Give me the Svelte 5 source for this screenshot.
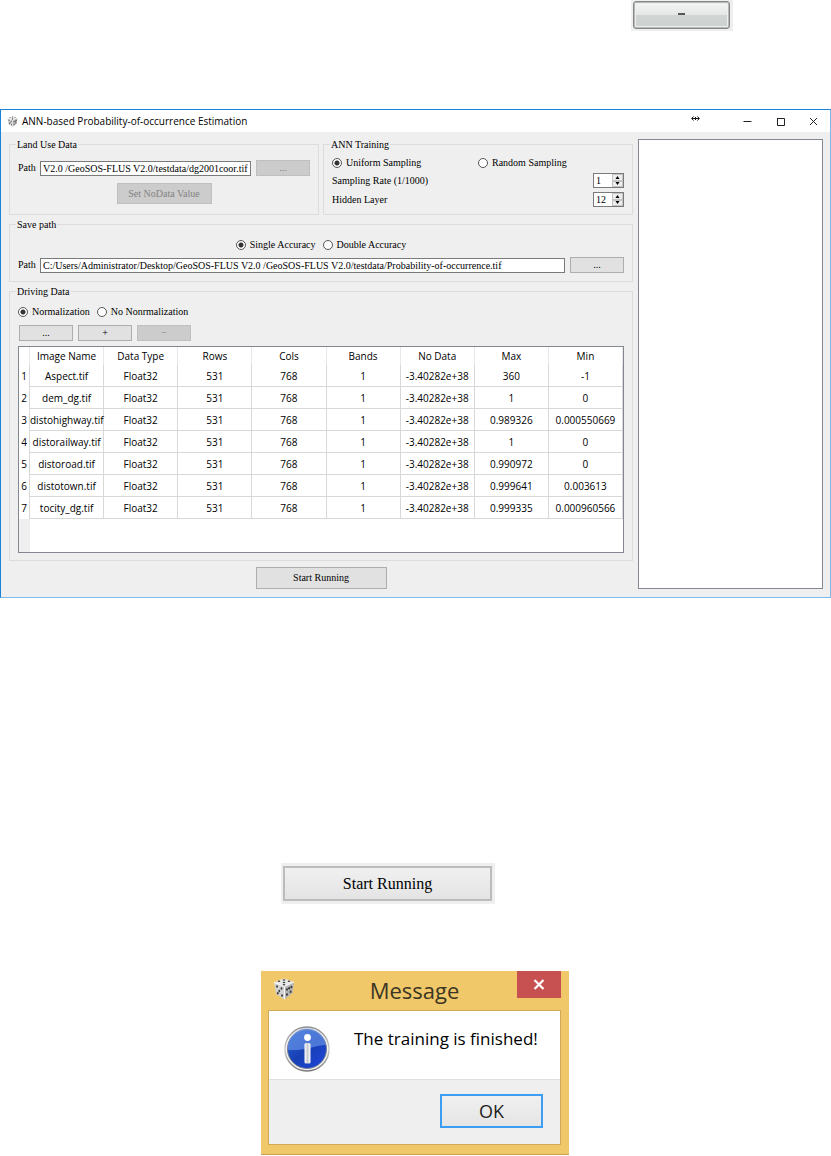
<script>
	let landUsePath = $state('V2.0 /GeoSOS-FLUS V2.0/testdata/dg2001coor.tif');
	let savePath = $state(
		'C:/Users/Administrator/Desktop/GeoSOS-FLUS V2.0 /GeoSOS-FLUS V2.0/testdata/Probability-of-occurrence.tif'
	);
	let sampling = $state('uniform');
	let accuracy = $state('single');
	let normalization = $state('yes');
	let samplingRate = $state(1);
	let hiddenLayer = $state(12);

	const columns = ['Image Name', 'Data Type', 'Rows', 'Cols', 'Bands', 'No Data', 'Max', 'Min'];

	const noData = '-3.40282e+38';
	const images = [
		['Aspect.tif', 'Float32', 531, 768, 1, noData, '360', '-1'],
		['dem_dg.tif', 'Float32', 531, 768, 1, noData, '1', '0'],
		['distohighway.tif', 'Float32', 531, 768, 1, noData, '0.989326', '0.000550669'],
		['distorailway.tif', 'Float32', 531, 768, 1, noData, '1', '0'],
		['distoroad.tif', 'Float32', 531, 768, 1, noData, '0.990972', '0'],
		['distotown.tif', 'Float32', 531, 768, 1, noData, '0.999641', '0.003613'],
		['tocity_dg.tif', 'Float32', 531, 768, 1, noData, '0.999335', '0.000960566']
	];
</script>

{#snippet dice(size)}
	<svg class="dice" width={size} height={size} viewBox="0 0 22 22" aria-hidden="true">
		<path d="M11 0.5 L21 4 L11.5 8.5 L1 4.5 Z" fill="#e9e9e9" />
		<path d="M1 4.5 L11.5 8.5 L11.5 21.5 L3 16 Z" fill="#d2d2d2" />
		<path d="M21 4 L11.5 8.5 L11.5 21.5 L19.5 15 Z" fill="#b4b4b4" />
		<path d="M1 4.5 L11.5 8.5 L21 4 M11.5 8.5 V21.5" fill="none" stroke="#f8f8f8" />
		<g fill="#3c3c3c">
			<ellipse cx="11" cy="2" rx="1.3" ry="0.8" />
			<ellipse cx="6" cy="3.3" rx="1.3" ry="0.8" />
			<ellipse cx="16" cy="3.3" rx="1.3" ry="0.8" />
			<ellipse cx="11" cy="4.5" rx="1.3" ry="0.8" />
			<ellipse cx="11" cy="6.8" rx="1.3" ry="0.8" />
			<ellipse cx="4" cy="8.5" rx="0.9" ry="1.3" />
			<ellipse cx="8.5" cy="10.5" rx="0.9" ry="1.3" />
			<ellipse cx="6.3" cy="13" rx="0.9" ry="1.3" />
			<ellipse cx="4.8" cy="15.3" rx="0.9" ry="1.3" />
			<ellipse cx="9" cy="17.5" rx="0.9" ry="1.3" />
			<ellipse cx="14" cy="11.5" rx="1" ry="1.2" />
			<ellipse cx="16.2" cy="10.3" rx="1" ry="1.2" />
			<ellipse cx="18.4" cy="9" rx="1" ry="1.2" />
			<ellipse cx="14" cy="16.5" rx="1" ry="1.2" />
			<ellipse cx="17.6" cy="13.8" rx="1" ry="1.2" />
		</g>
	</svg>
{/snippet}

{#snippet arrows(up, down)}
	<span class="arrows">
		<button type="button" aria-label="Increase" onclick={up}>
			<svg width="5" height="3" viewBox="0 0 5 3"><path d="M2.5 0 L4.5 3 H0.5 Z" /></svg>
		</button>
		<button type="button" aria-label="Decrease" onclick={down}>
			<svg width="5" height="3" viewBox="0 0 5 3"><path d="M2.5 3 L4.5 0 H0.5 Z" /></svg>
		</button>
	</span>
{/snippet}

<main>
	<div class="remove-panel">
		<button class="glossy" type="button" aria-label="Remove"><span></span></button>
	</div>

	<section class="window">
		<header class="titlebar">
			{@render dice(11)}
			<h1>ANN-based Probability-of-occurrence Estimation</h1>
			<svg class="resize" width="9" height="7" viewBox="0 0 9 7" aria-hidden="true">
				<path d="M1 3.5 H8 M2.5 1.5 L0.7 3.5 L2.5 5.5 M6.5 1.5 L8.3 3.5 L6.5 5.5" fill="none" stroke="#111" />
				<path d="M4.5 2 V5" stroke="#111" />
			</svg>
			<button type="button" aria-label="Minimize">
				<svg width="9" height="9" viewBox="0 0 9 9"><path d="M0.5 4.5 H8.5" /></svg>
			</button>
			<button type="button" aria-label="Maximize">
				<svg width="9" height="9" viewBox="0 0 9 9"><path d="M1 1.5 H8.5 V8.5 H1.5 V1" /></svg>
			</button>
			<button type="button" aria-label="Close">
				<svg width="9" height="9" viewBox="0 0 9 9"><path d="M1 1 L8 8 M8 1 L1 8" /></svg>
			</button>
		</header>

		<div class="body">
			<div class="form">
				<div class="pair">
					<fieldset class="land">
						<legend>Land Use Data</legend>
						<div class="path-row">
							<label for="land-path">Path</label>
							<input id="land-path" class="text" type="text" bind:value={landUsePath} />
							<button class="btn" type="button" disabled>...</button>
						</div>
						<button class="btn nodata" type="button" disabled>Set NoData Value</button>
					</fieldset>

					<fieldset class="training">
						<legend>ANN Training</legend>
						<div class="halves">
							<label><input type="radio" value="uniform" bind:group={sampling} />Uniform Sampling</label>
							<label><input type="radio" value="random" bind:group={sampling} />Random Sampling</label>
						</div>
						<div class="spin-row">
							<label for="rate">Sampling Rate (1/1000)</label>
							<span class="spin">
								<input id="rate" type="text" bind:value={samplingRate} />
								{@render arrows(() => samplingRate++, () => samplingRate--)}
							</span>
						</div>
						<div class="spin-row">
							<label for="hidden">Hidden Layer</label>
							<span class="spin">
								<input id="hidden" type="text" bind:value={hiddenLayer} />
								{@render arrows(() => hiddenLayer++, () => hiddenLayer--)}
							</span>
						</div>
					</fieldset>
				</div>

				<fieldset class="save">
					<legend>Save path</legend>
					<div class="radios center">
						<label><input type="radio" value="single" bind:group={accuracy} />Single Accuracy</label>
						<label><input type="radio" value="double" bind:group={accuracy} />Double Accuracy</label>
					</div>
					<div class="path-row">
						<label for="save-path">Path</label>
						<input id="save-path" class="text" type="text" bind:value={savePath} />
						<button class="btn" type="button">...</button>
					</div>
				</fieldset>

				<fieldset class="driving">
					<legend>Driving Data</legend>
					<div class="radios">
						<label><input type="radio" value="yes" bind:group={normalization} />Normalization</label>
						<label><input type="radio" value="no" bind:group={normalization} />No Nonrmalization</label>
					</div>
					<div class="tools">
						<button class="btn" type="button">...</button>
						<button class="btn" type="button">+</button>
						<button class="btn" type="button" disabled>−</button>
					</div>
					<div class="grid">
						<table>
							<thead>
								<tr>
									<th class="num"></th>
									{#each columns as column}
										<th>{column}</th>
									{/each}
								</tr>
							</thead>
							<tbody>
								{#each images as image, i}
									<tr>
										<th class="num">{i + 1}</th>
										{#each image as value}
											<td>{value}</td>
										{/each}
									</tr>
								{/each}
							</tbody>
						</table>
						<div class="gutter"></div>
					</div>
				</fieldset>

				<button class="btn start" type="button">Start Running</button>
			</div>

			<textarea class="log" aria-label="Log" readonly></textarea>
		</div>
	</section>

	<div class="start-panel">
		<button type="button">Start Running</button>
	</div>

	<section class="message" role="dialog" aria-labelledby="message-title">
		<header>
			{@render dice(22)}
			<h2 id="message-title">Message</h2>
			<button type="button" aria-label="Close">
				<svg width="12" height="11" viewBox="0 0 12 11">
					<path d="M1.5 1 L10.5 10 M10.5 1 L1.5 10" fill="none" stroke="#fff" stroke-width="2.2" />
				</svg>
			</button>
		</header>
		<div class="message-box">
			<div class="content">
				<svg width="46" height="46" viewBox="0 0 46 46" aria-hidden="true">
					<defs>
						<linearGradient id="ring" x1="0" y1="0" x2="0" y2="1">
							<stop offset="0" stop-color="#8d8d8d" />
							<stop offset="0.5" stop-color="#cfcfcf" />
							<stop offset="1" stop-color="#777" />
						</linearGradient>
						<linearGradient id="blue" x1="0" y1="0" x2="1" y2="1">
							<stop offset="0" stop-color="#2a5fd0" />
							<stop offset="0.5" stop-color="#1740b4" />
							<stop offset="1" stop-color="#2146dc" />
						</linearGradient>
						<linearGradient id="stem" x1="0" y1="0" x2="1" y2="0">
							<stop offset="0" stop-color="#fff" />
							<stop offset="0.5" stop-color="#c9cbd2" />
							<stop offset="1" stop-color="#fff" />
						</linearGradient>
					</defs>
					<circle cx="23" cy="23" r="22" fill="#f4f4f4" stroke="url(#ring)" stroke-width="1.5" />
					<circle cx="23" cy="23" r="19.5" fill="url(#blue)" stroke="#777d90" />
					<path d="M4 24 A19 19 0 0 1 42 19 C32 19 23 25 4 24 Z" fill="#6f9cec" opacity="0.6" />
					<circle cx="23.5" cy="11.5" r="3.4" fill="#fff" />
					<rect x="20.5" y="17" width="6" height="20.5" rx="1.5" fill="url(#stem)" />
				</svg>
				<p>The training is finished!</p>
			</div>
			<div class="actions">
				<button type="button">OK</button>
			</div>
		</div>
	</section>
</main>

<style>
	:global(body) {
		margin: 0;
		background: #fff;
	}

	main {
		--serif: 'Liberation Serif', 'Times New Roman', serif;
		--sans: 'Open Sans', 'Noto Sans', sans-serif;
		--panel: #efefef;
		display: flow-root;
		color: #000;
		font: 10px/12px var(--serif);
	}

	button,
	input,
	textarea {
		box-sizing: border-box;
		margin: 0;
		padding: 0;
		color: inherit;
		font: inherit;
	}

	svg {
		display: block;
		flex: none;
	}

	.remove-panel {
		width: 102px;
		height: 31px;
		box-sizing: border-box;
		margin: 0 98px 78px auto;
		padding: 1px 2px;
		background: var(--panel);
	}

	.glossy {
		display: flex;
		align-items: center;
		justify-content: center;
		width: 97px;
		height: 28px;
		border: 1px solid #858887;
		border-radius: 3px;
		background: linear-gradient(#f3f6f5, #e4e7e6 48%, #d0d4d2 52%, #cdd1cf);
		box-shadow: inset 0 0 0 1px #b5b8b7, inset 0 0 0 2px #eef0ef;
	}

	.glossy span {
		width: 7px;
		height: 2px;
		margin-bottom: 2px;
		background: #555;
	}

	.window {
		border: 1px solid #1883d7;
		border-right-color: #7ab9eb;
		border-bottom-color: #7ab9eb;
		background: var(--panel);
	}

	.titlebar {
		display: flex;
		align-items: center;
		height: 22px;
		padding-left: 6px;
		background: #fff;
	}

	.titlebar h1 {
		flex: 1;
		margin: 0 0 0 4px;
		font: 10px/14px var(--sans);
	}

	.titlebar .resize {
		margin: 0 31px 6px 0;
	}

	.titlebar button {
		display: flex;
		justify-content: center;
		width: 33px;
		border: 0;
		background: none;
	}

	.titlebar button path {
		fill: none;
		stroke: #222;
	}

	.body {
		display: grid;
		grid-template-columns: 1fr 185px;
		gap: 5px;
		padding: 7px 7px 8px 8px;
	}

	.pair {
		display: grid;
		grid-template-columns: 1fr 1fr;
		gap: 4px;
		margin-bottom: 4px;
	}

	fieldset {
		min-width: 0;
		margin: 0;
		padding: 0 8px;
		border: 1px solid #dcdcdc;
	}

	legend {
		margin-left: -2px;
		padding: 0 1px;
		line-height: 11px;
	}

	.land {
		padding-top: 10px;
		padding-bottom: 10px;
	}

	.path-row {
		display: flex;
		gap: 5px;
		align-items: center;
	}

	.path-row label {
		width: 17px;
	}

	.text {
		flex: 1;
		min-width: 0;
		height: 15px;
		padding: 0 2px;
		border: 1px solid #7a7a7a;
		background: #fff;
	}

	.btn {
		width: 54px;
		height: 16px;
		border: 1px solid #adadad;
		background: #e1e1e1;
		line-height: 12px;
	}

	.btn:disabled {
		border-color: #bfbfbf;
		background: #ccc;
		color: #838383;
	}

	.nodata {
		display: block;
		width: 95px;
		height: 21px;
		margin: 7px auto 0;
	}

	.training {
		padding-top: 7px;
	}

	.halves {
		display: grid;
		grid-template-columns: 1fr 1fr;
		margin-bottom: 4px;
	}

	.halves label,
	.radios label {
		display: flex;
		align-items: center;
		gap: 4px;
	}

	input[type='radio'] {
		appearance: none;
		width: 10px;
		height: 10px;
		border: 1px solid #555;
		border-radius: 50%;
		background: #fff;
	}

	input[type='radio']:checked {
		background: radial-gradient(circle, #333 0 2px, #fff 3px);
	}

	.spin-row {
		display: flex;
		align-items: center;
		justify-content: space-between;
		margin-bottom: 4px;
	}

	.spin {
		display: flex;
		box-sizing: border-box;
		width: 31px;
		height: 15px;
		border: 1px solid #7a7a7a;
		background: #fff;
	}

	.spin input {
		flex: 1;
		min-width: 0;
		padding-left: 2px;
		border: 0;
		background: none;
	}

	.arrows {
		display: flex;
		flex-direction: column;
		width: 11px;
	}

	.arrows button {
		display: flex;
		flex: 1;
		align-items: center;
		justify-content: center;
		border: 1px solid #c4c4c4;
		background: #eee;
	}

	.save {
		margin-bottom: 4px;
		padding-top: 9px;
		padding-bottom: 8px;
	}

	.radios {
		display: flex;
		gap: 7px;
	}

	.center {
		justify-content: center;
		margin-bottom: 6px;
	}

	.driving {
		padding-top: 9px;
		padding-bottom: 7px;
	}

	.tools {
		display: flex;
		gap: 5px;
		margin: 7px 0 5px 1px;
	}

	.grid {
		border: 1px solid #828790;
		background: #fff;
		font: 10px/14px var(--sans);
	}

	table {
		width: 100%;
		border-collapse: separate;
		border-spacing: 0;
		table-layout: fixed;
	}

	th,
	td {
		box-sizing: border-box;
		height: 22px;
		padding: 0;
		border-right: 1px solid #d8d8d8;
		border-bottom: 1px solid #d8d8d8;
		font-weight: 400;
		text-align: center;
		white-space: nowrap;
	}

	thead th {
		height: 18px;
		border-right-color: #e8e8e8;
		border-bottom: 0;
	}

	.num {
		width: 11px;
		border-bottom: 0;
	}

	.gutter {
		width: 11px;
		height: 33px;
		background: var(--panel);
	}

	.start {
		display: block;
		width: 131px;
		height: 22px;
		margin: 6px auto 0;
	}

	.log {
		width: 100%;
		height: 100%;
		border: 1px solid #828790;
		background: #fff;
		resize: none;
	}

	.start-panel {
		box-sizing: border-box;
		width: 214px;
		height: 41px;
		margin: 265px 0 67px 281px;
		padding: 3px 2px;
		background: var(--panel);
	}

	.start-panel button {
		width: 209px;
		height: 35px;
		border: 2px solid #bcbcbc;
		background: linear-gradient(#f0f0f0, #e4e4e4);
		font-size: 16px;
	}

	.message {
		box-sizing: border-box;
		width: 308px;
		margin-left: 261px;
		padding: 0 8px 9px 7px;
		border-bottom: 1px solid #c9a14d;
		background: #f0c869;
		color: #222;
		font-family: var(--sans);
	}

	.message header {
		display: flex;
		align-items: flex-start;
		height: 39px;
	}

	.message .dice {
		margin: 7px 0 0 5px;
	}

	.message h2 {
		flex: 1;
		margin: 4px 0 0 17px;
		color: #3b3524;
		font-weight: 400;
		font-size: 22px;
		line-height: 30px;
		text-align: center;
	}

	.message header button {
		display: flex;
		align-items: center;
		justify-content: center;
		width: 44px;
		height: 27px;
		border: 0;
		background: #c75050;
	}

	.message-box {
		border: 1px solid #cfab58;
		background: var(--panel);
	}

	.content {
		display: flex;
		gap: 24px;
		height: 69px;
		box-sizing: border-box;
		padding: 15px;
		border-bottom: 1px solid #dfdfdf;
		background: #fff;
	}

	.content p {
		margin: 0;
		color: #000;
		font-size: 17px;
		line-height: 26px;
		white-space: nowrap;
	}

	.actions {
		display: flex;
		justify-content: flex-end;
		padding: 14px 17px 16px;
	}

	.actions button {
		width: 103px;
		height: 34px;
		border: 2px solid #3d9df5;
		background: linear-gradient(#f0f0f0, #e5e5e5);
		font-size: 18px;
	}
</style>
